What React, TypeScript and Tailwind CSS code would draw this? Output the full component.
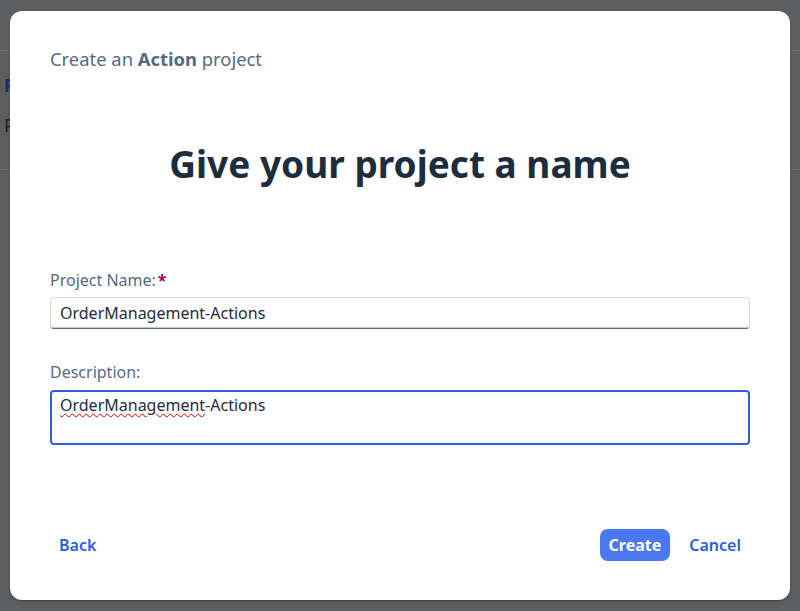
import React from 'react';

const font = { fontFamily: '"Noto Sans", "Liberation Sans", Arial, sans-serif' };

function BackgroundPage() {
  return (
    <div className="flex h-full flex-col">
      <div className="h-[51px] border-b border-[#6e6f71] bg-[#5e5f61]" />
      <div className="flex h-[119px] flex-col gap-3 border-b border-[#6e6f71] px-1 pt-5">
        <span className="text-lg font-bold text-[#1a2a6e]">P</span>
        <span className="text-lg text-[#1c1d1f]">P</span>
      </div>
      <div className="flex-1" />
    </div>
  );
}

export default function App() {
  return (
    <div className="relative h-[611px] w-[800px] overflow-hidden bg-[#5c5d5f]" style={font}>
      <BackgroundPage />
      <div className="absolute left-[10px] top-[11px] flex h-[589px] w-[780px] flex-col rounded-xl bg-white px-10 shadow-[0_1px_2px_rgba(0,0,0,0.35)]">
        <div className="pt-[34px] text-[18.4px] text-[#556b82]">
          Create an <span className="font-bold">Action</span> project
        </div>

        <h1 className="mt-[72px] text-center text-[37px] font-bold leading-none text-[#1d2d3e]">
          Give your project a name
        </h1>

        <div className="mt-[86px] flex flex-col">
          <label className="text-base text-[#556b82]">
            Project Name:<span className="ml-0.5 font-bold text-[#a1005c]">*</span>
          </label>
          <div className="mt-[5px] flex h-[32px] items-center rounded-[4px] border border-[#d5dadd] border-b-[#556b82] px-[9px] text-base text-[#1d2d3e] shadow-[inset_0_-1px_0_#c3c9cf]">
            OrderManagement-Actions
          </div>

          <label className="mt-[31px] text-base text-[#556b82]">Description:</label>
          <div className="mt-[6px] h-[55px] rounded-[4px] border-2 border-[#2f5fd8] px-[8px] pt-[1px] text-base text-[#1d2d3e]">
            <span className="underline decoration-wavy decoration-[#e00000] decoration-1 underline-offset-2">OrderManagement</span>
            -Actions
          </div>
        </div>

        <div className="mt-auto mb-[39px] flex items-center">
          <button className="px-[9px] text-base font-semibold text-[#2c5ed9]">Back</button>
          <div className="flex-1" />
          <button className="h-[32px] rounded-lg bg-[#4a78ee] px-[9px] text-base font-bold text-white">Create</button>
          <button className="ml-[10px] px-[9px] text-base font-semibold text-[#2c5ed9]">Cancel</button>
        </div>
      </div>
    </div>
  );
}
